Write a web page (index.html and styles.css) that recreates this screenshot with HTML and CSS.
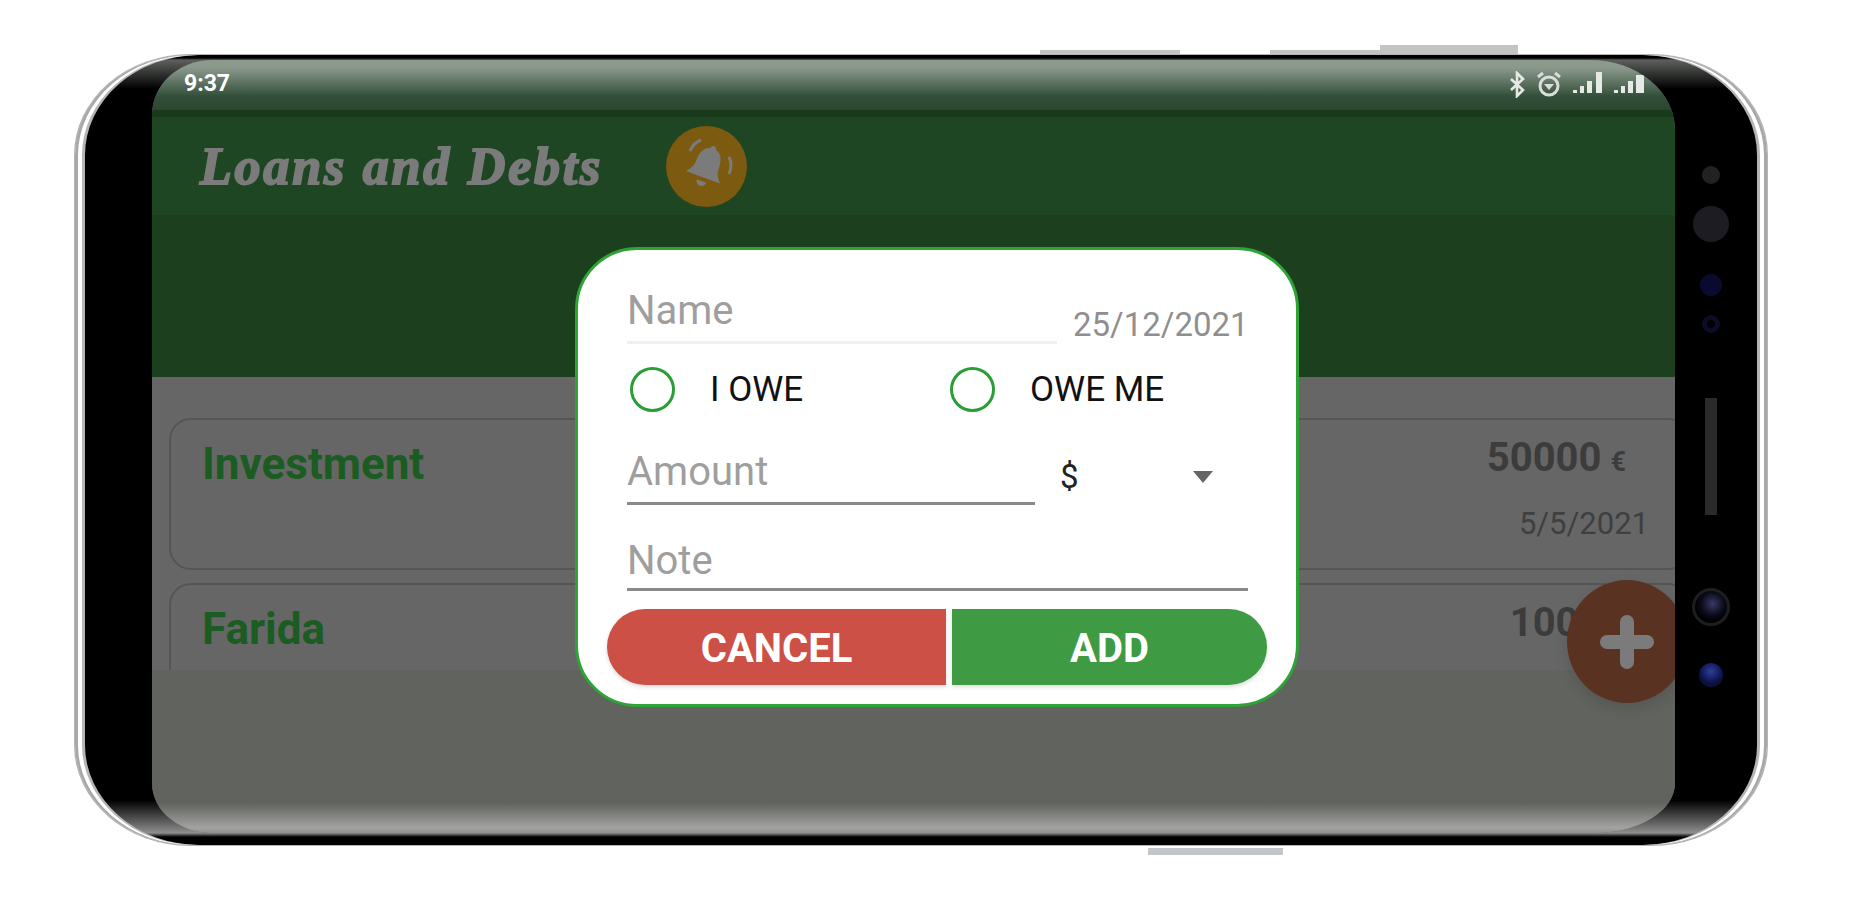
FILE: index.html
```html
<!DOCTYPE html>
<html lang="en">
  <head>
    <meta charset="UTF-8" />
    <title>Loans and Debts</title>
    <link rel="stylesheet" href="styles.css">
  </head>
  <body>
    <div class="phone">
      <span class="side-key key-a"></span>
      <span class="side-key key-b"></span>
      <span class="side-key key-c"></span>

      <div class="screen">
        <div class="statusbar">
          <span class="clock">9:37</span>
          <div class="status-icons">
            <svg width="17" height="27" viewBox="0 0 17 27"><path d="M2 8l12 11-6 6V2l6 6L2 19" fill="none" stroke="#e6e9e6" stroke-width="2.6"/></svg>
            <svg width="26" height="26" viewBox="0 0 26 26"><circle cx="13" cy="15" r="9" fill="none" stroke="#d9ddd9" stroke-width="3"/><path d="M2 6l5-4M24 6l-5-4" stroke="#d9ddd9" stroke-width="3"/><path d="M8 13h10l-5 6z" fill="#d9ddd9"/></svg>
            <svg width="31" height="23" viewBox="0 0 31 23"><path d="M1 19h4v3H1zM8 15h4v7H8zM15 10h5v12h-5zM24 1h6v21h-6z" fill="#e6e9e6"/></svg>
            <svg width="32" height="23" viewBox="0 0 32 23"><path d="M1 19h4v3H1zM8 15h4v7H8zM15 10h5v12h-5zM23 4h8v18h-8z" fill="#e6e9e6"/></svg>
          </div>
        </div>

        <header class="topbar">
          <h1 class="app-title">Loans and Debts</h1>
          <div class="bell">
            <svg width="62" height="62" viewBox="0 0 62 62">
              <g fill="#7b7b7b" transform="rotate(20 31 31)">
                <path d="M31 10a3 3 0 0 1 3 3c7 2 9 9 9 16 0 7 3 10 6 14H13c3-4 6-7 6-14 0-7 2-14 9-16a3 3 0 0 1 3-3z"/>
                <path d="M26 47h10a5 5 0 0 1-10 0z"/>
              </g>
              <path d="M25 5q-8 3-11 11M53 22q4 8 0 17" fill="none" stroke="#7b7b7b" stroke-width="3"/>
            </svg>
          </div>
        </header>
        <div class="tabs"></div>

        <div class="list">
          <div class="card">
            <h2 class="person">Investment</h2>
            <div class="sum">
              <p class="amount">50000<small>€</small></p>
              <p class="when">5/5/2021</p>
            </div>
          </div>
          <div class="card">
            <h2 class="person">Farida</h2>
            <div class="sum">
              <p class="amount">1000<small>€</small></p>
            </div>
          </div>
        </div>
        <div class="list-end"></div>

        <button class="fab">
          <svg width="54" height="54" viewBox="0 0 54 54"><path d="M27 7v40M7 27h40" stroke="#7b7b7b" stroke-width="14" stroke-linecap="round"/></svg>
        </button>

        <form class="dialog">
          <div class="row-name">
            <div class="field field-name">Name</div>
            <span class="date">25/12/2021</span>
          </div>
          <div class="row-radio">
            <label class="choice"><span class="radio"></span>I OWE</label>
            <label class="choice"><span class="radio"></span>OWE ME</label>
          </div>
          <div class="row-amount">
            <div class="field field-amount">Amount</div>
            <div class="currency"><span>$</span><i class="caret"></i></div>
          </div>
          <div class="field field-note">Note</div>
          <div class="actions">
            <button type="button" class="btn btn-cancel">CANCEL</button>
            <button type="button" class="btn btn-add">ADD</button>
          </div>
        </form>
      </div>

      <div class="sensors">
        <span class="dot dot-speaker"></span>
        <span class="dot dot-front"></span>
        <span class="dot dot-iris"></span>
        <span class="dot dot-prox"></span>
        <span class="slot"></span>
        <span class="dot dot-camera"></span>
        <span class="dot dot-flash"></span>
      </div>
    </div>
    <div class="bottom-key"></div>
  </body>
</html>
```

FILE: styles.css
```css
* {
  box-sizing: border-box;
}
body {
  margin: 0;
  padding: 55px 0 0 75px;
  background-color: #fff;
  font-family: Roboto, sans-serif;
}
h1,
h2,
p {
  margin: 0;
  font-weight: normal;
}

/* phone body */
.phone {
  position: relative;
  display: flex;
  width: 1692px;
  height: 790px;
  padding: 5px 0 12px 77px;
  border-radius: 115px / 100px;
  background: linear-gradient(
    to bottom,
    #000 0,
    #000 3px,
    #5d605d 5px,
    #000 34px,
    #000 745px,
    #8e8e8e 778px,
    #000 782px,
    #000 100%
  );
  box-shadow: inset 3px 0 #a8a8a8, inset 7px 0 #fff, inset 10px 0 #b5b5b5,
    inset -3px 0 #a8a8a8, inset -7px 0 #fff, inset -10px 0 #b5b5b5,
    0 0 0 1px #b5b5b5;
}
.side-key {
  position: absolute;
  background-color: #c4c4c4;
}
.key-a {
  left: 965px;
  top: -5px;
  width: 140px;
  height: 4px;
}
.key-b {
  left: 1195px;
  top: -5px;
  width: 110px;
  height: 4px;
}
.key-c {
  left: 1305px;
  top: -10px;
  width: 138px;
  height: 9px;
}
.bottom-key {
  width: 135px;
  height: 7px;
  margin: 3px 0 0 1073px;
  background-color: #c2c6ca;
}

/* screen */
.screen {
  position: relative;
  display: flex;
  flex-direction: column;
  width: 1523px;
  height: 773px;
  overflow: hidden;
  border-radius: 60px 85px 80px 60px / 55px 70px 50px 50px;
  background-color: #61635f;
}
.statusbar {
  display: flex;
  justify-content: space-between;
  height: 57px;
  padding: 11px 30px 0 32px;
  background: linear-gradient(
    to bottom,
    #8d9b8f 0,
    #8a988c 8px,
    #33503a 36px,
    #2c4530 50px,
    #193a1b 50px
  );
}
.clock {
  color: #fff;
  font-size: 23px;
  font-weight: 700;
  line-height: 26px;
}
.status-icons {
  display: flex;
  gap: 10px;
  height: 28px;
}
.topbar {
  display: flex;
  align-items: center;
  gap: 48px;
  height: 98px;
  padding-left: 48px;
  background-color: #1f4622;
}
.app-title {
  width: 418px;
  color: #7b7b7b;
  font-family: "Liberation Serif", serif;
  font-size: 52px;
  font-style: italic;
  font-weight: 700;
  letter-spacing: 2.8px;
  white-space: nowrap;
  -webkit-text-stroke: 2px #7b7b7b;
}
.bell {
  display: flex;
  align-items: center;
  justify-content: center;
  width: 81px;
  height: 81px;
  border-radius: 50%;
  background-color: #7c5a10;
}
.tabs {
  height: 162px;
  background-color: #1c3f1e;
}

/* loan list */
.list {
  height: 293px;
  overflow: hidden;
  padding: 41px 0 0 17px;
  background-color: #666;
}
.card {
  display: flex;
  justify-content: space-between;
  width: 1521px;
  height: 152px;
  margin-bottom: 13px;
  padding: 20px 39px 0 31px;
  border: 2px solid #555;
  border-radius: 22px;
}
.person {
  color: #1a5c22;
  font-size: 44px;
  font-weight: 700;
  line-height: 48px;
}
.sum {
  display: flex;
  flex-direction: column;
  align-items: flex-end;
}
.amount {
  margin-top: -6px;
  padding-right: 23px;
  color: #3c3c3c;
  font-size: 40px;
  font-weight: 700;
  line-height: 48px;
}
.amount small {
  margin-left: 9px;
  font-size: 27px;
}
.when {
  margin-top: 20px;
  color: #3f3f3f;
  font-size: 31px;
  line-height: 36px;
}
.list-end {
  flex: 1;
  background: linear-gradient(
    to bottom,
    #61635f 0,
    #61635f 133px,
    #a3a4a2 158px,
    #8f908e 163px
  );
}
.fab {
  position: absolute;
  left: 1415px;
  top: 520px;
  display: flex;
  align-items: center;
  justify-content: center;
  width: 120px;
  height: 123px;
  padding: 0;
  border: 0;
  border-radius: 50%;
  background-color: #5a3222;
  box-shadow: 0 6px 14px rgba(0, 0, 0, 0.12);
}

/* add dialog */
.dialog {
  position: absolute;
  left: 423px;
  top: 187px;
  width: 724px;
  height: 460px;
  padding: 31px 29px 0;
  border: 3px solid #2ea336;
  border-radius: 62px;
  background-color: #fff;
}
.row-name,
.row-radio,
.row-amount {
  display: flex;
  padding-left: 20px;
}
.field {
  color: #9e9e9e;
  font-size: 40px;
  line-height: 60px;
  border-bottom: 3px solid #8a8a8a;
}
.field-name {
  width: 430px;
  border-bottom-color: #f0f0f0;
}
.date {
  align-self: flex-end;
  margin: 0 0 -1px 16px;
  color: #8f8f8f;
  font-size: 33px;
  line-height: 40px;
}
.row-radio {
  margin-top: 17px;
  height: 56px;
  align-items: center;
}
.choice {
  display: flex;
  align-items: center;
  gap: 35px;
  width: 320px;
  color: #111;
  font-size: 35px;
}
.radio {
  width: 45px;
  height: 45px;
  margin-left: 3px;
  border: 3px solid #2a9d35;
  border-radius: 50%;
}
.row-amount {
  margin-top: 25px;
}
.field-amount {
  width: 408px;
}
.currency {
  display: flex;
  align-items: center;
  justify-content: space-between;
  width: 153px;
  margin-left: 25px;
  padding-top: 6px;
  color: #222;
  font-size: 33px;
}
.caret {
  width: 0;
  height: 0;
  border-top: 12px solid #666;
  border-left: 10px solid transparent;
  border-right: 10px solid transparent;
}
.field-note {
  width: 621px;
  margin: 29px 0 0 20px;
  line-height: 54px;
}
.actions {
  display: flex;
  gap: 6px;
  margin-top: 18px;
}
.btn {
  height: 76px;
  padding: 3px 0 0;
  border: 0;
  color: #fff;
  font-family: Roboto, sans-serif;
  font-size: 40px;
  font-weight: 700;
  box-shadow: 0 2px 4px rgba(0, 0, 0, 0.15);
}
.btn-cancel {
  width: 339px;
  border-radius: 38px 0 0 38px;
  background-color: #cd5047;
}
.btn-add {
  width: 315px;
  border-radius: 0 38px 38px 0;
  background-color: #3e9b44;
}

/* camera cut-outs on the right bezel */
.sensors {
  display: flex;
  flex: 1;
  flex-direction: column;
  align-items: center;
  padding: 106px 20px 0 0;
}
.dot {
  display: block;
  border-radius: 50%;
}
.dot-speaker {
  width: 18px;
  height: 18px;
  background-color: #222;
}
.dot-front {
  width: 36px;
  height: 36px;
  margin-top: 22px;
  background-color: #1c1c22;
}
.dot-iris {
  width: 22px;
  height: 22px;
  margin-top: 32px;
  background-color: #0a0a30;
}
.dot-prox {
  width: 18px;
  height: 18px;
  margin-top: 19px;
  border: 5px solid #0c0c28;
  background-color: #000;
}
.slot {
  width: 12px;
  height: 117px;
  margin-top: 65px;
  background-color: #2a2a2a;
}
.dot-camera {
  width: 38px;
  height: 38px;
  margin-top: 73px;
  border: 3px solid #1d1d22;
  background: radial-gradient(circle at 55% 40%, #3a3a66 0, #0a0a18 45%, #000 70%);
}
.dot-flash {
  width: 24px;
  height: 24px;
  margin-top: 37px;
  background: radial-gradient(circle at 50% 35%, #2c3f9a 0, #0a1145 60%, #10101c 100%);
}
```
